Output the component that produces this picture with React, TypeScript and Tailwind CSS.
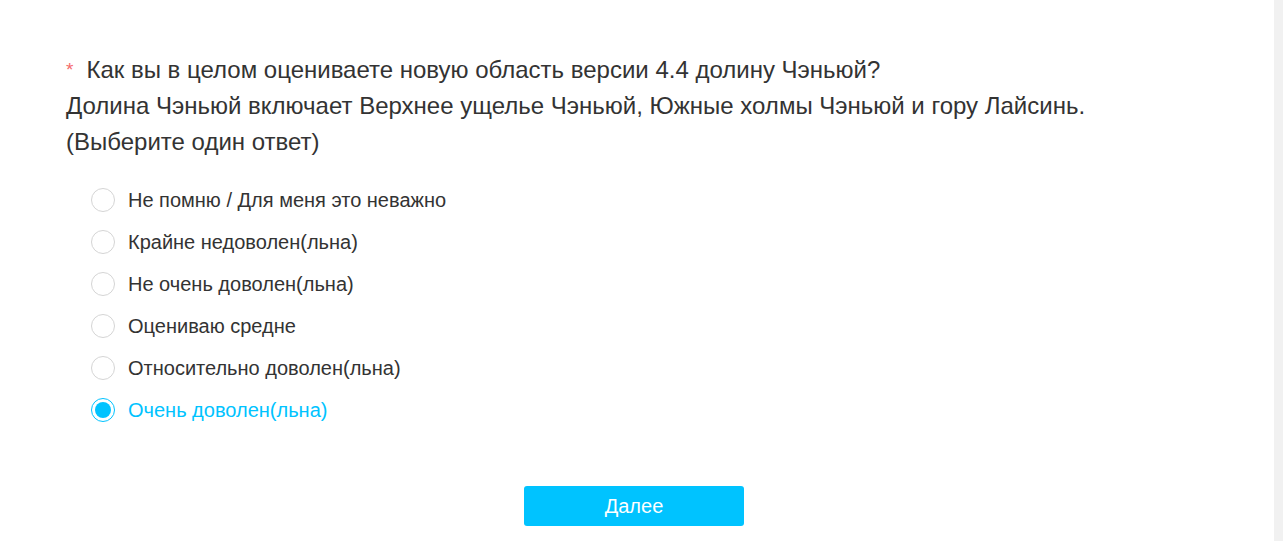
import { useState } from "react";

const options = [
  "Не помню / Для меня это неважно",
  "Крайне недоволен(льна)",
  "Не очень доволен(льна)",
  "Оцениваю средне",
  "Относительно доволен(льна)",
  "Очень доволен(льна)",
];

const Radio = ({ checked }: Readonly<{ checked: boolean }>) => (
  <span
    className={`flex h-[24px] w-[24px] shrink-0 items-center justify-center rounded-full border ${
      checked ? "border-[#00c3ff]" : "border-[#d5d5d5]"
    } bg-white`}
  >
    {checked && <span className="h-[16px] w-[16px] rounded-full bg-[#00c3ff]" />}
  </span>
);

export default function App() {
  const [selected, setSelected] = useState(5);

  return (
    <div className="flex h-[541px] w-full bg-white font-['Liberation_Sans',Arial,sans-serif] text-[#333]">
      <main className="flex flex-1 flex-col pt-[52px] pl-[66px]">
        <div className="text-[24px] leading-[36px]">
          <p>
            <span className="mr-[13px] align-top text-[19px] text-[#f56c6c]">*</span>
            Как вы в целом оцениваете новую область версии 4.4 долину Чэньюй?
          </p>
          <p>Долина Чэньюй включает Верхнее ущелье Чэньюй, Южные холмы Чэньюй и гору Лайсинь.</p>
          <p>(Выберите один ответ)</p>
        </div>
        <ul className="mt-[19px] flex flex-col pl-[25px]">
          {options.map((label, index) => (
            <li key={label}>
              <button
                type="button"
                className="flex h-[42px] cursor-pointer items-center gap-[13px]"
                onClick={() => setSelected(index)}
              >
                <Radio checked={selected === index} />
                <span
                  className={`text-[20px] ${selected === index ? "text-[#00c3ff]" : "text-[#333]"}`}
                >
                  {label}
                </span>
              </button>
            </li>
          ))}
        </ul>
        <div className="mt-[55px] flex justify-center pr-[72px]">
          <button
            type="button"
            className="h-[40px] w-[220px] rounded-[3px] bg-[#00c3ff] text-[20px] text-white"
          >
            Далее
          </button>
        </div>
      </main>
      <div className="w-[9px] shrink-0 bg-[#f1f1f1]" />
    </div>
  );
}
